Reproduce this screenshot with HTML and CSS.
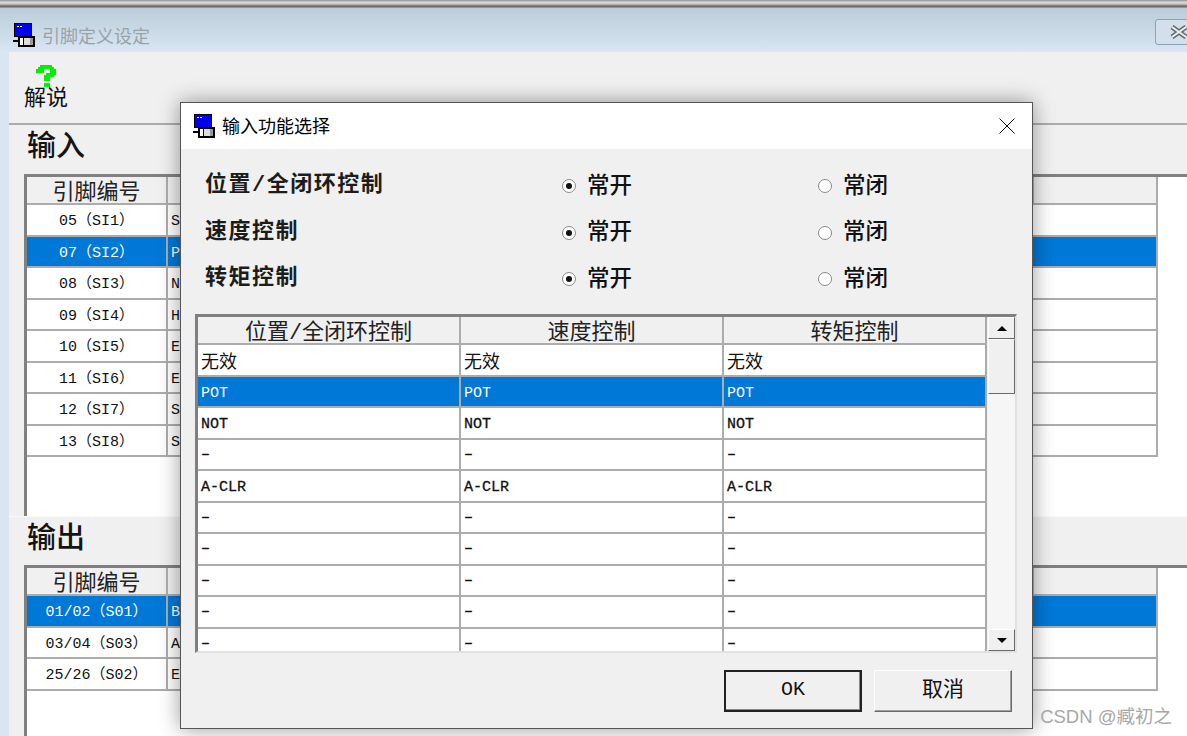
FILE: index.html
```html
<!DOCTYPE html>
<html lang="en">

<head>
    <meta charset="UTF-8">
    <meta name="viewport" content="width=device-width, initial-scale=1.0">
    <title>引脚定义设定</title>
    <link rel="stylesheet" href="styles.css">
</head>

<body>

    <svg class="sprites" width="0" height="0">
        <symbol id="app-icon" viewBox="0 0 22 24" shape-rendering="crispEdges">
            <rect x="1" y="0" width="18" height="14" fill="#000"/>
            <rect x="2" y="1" width="16" height="12" fill="#0000f0"/>
            <rect x="4" y="3" width="2" height="1" fill="#fff"/>
            <rect x="7" y="3" width="2" height="1" fill="#fff"/>
            <rect x="0" y="17" width="6" height="2" fill="#000"/>
            <rect x="5" y="13" width="17" height="11" fill="#000"/>
            <rect x="7" y="15" width="3" height="7" fill="#fff"/>
            <rect x="11" y="15" width="9" height="7" fill="#ddd"/>
            <rect x="17" y="15" width="3" height="7" fill="#999"/>
        </symbol>
    </svg>

    <div class="top-strip"></div>

    <div class="titlebar">
        <svg class="icon-app"><use href="#app-icon"/></svg>
        <span class="titlebar-text">引脚定义设定</span>
        <span class="titlebar-close">
            <svg width="20" height="14" viewBox="0 0 20 14">
                <path d="M2 2 L16 12 M16 2 L2 12" stroke="#62696e" stroke-width="5" fill="none"/>
                <path d="M2 2 L16 12 M16 2 L2 12" stroke="#eef1f3" stroke-width="2" fill="none"/>
            </svg>
        </span>
    </div>

    <div class="client">
        <div class="toolbar">
            <div class="tool-btn">
                <svg class="icon-help" viewBox="0 0 10 11" shape-rendering="crispEdges">
                    <path fill="#00f000" d="M2 0h6v1h1v1h1v3H9v1H7v2H4V5h1V4h2V2H4v2H0V2h1V1h1z"/>
                    <path fill="#00f000" d="M4 9h3v2H4z"/>
                </svg>
                <span>解说</span>
            </div>
        </div>

        <h2 class="section-title">输入</h2>
        <div class="listbox listbox-in">
            <div class="list-row list-head"><div>引脚编号</div><div></div><div></div></div>
            <div class="list-row"><div class="pin">05（SI1）</div><div>S</div></div>
            <div class="list-row selected"><div class="pin">07（SI2）</div><div>P</div></div>
            <div class="list-row"><div class="pin">08（SI3）</div><div>N</div></div>
            <div class="list-row"><div class="pin">09（SI4）</div><div>H</div></div>
            <div class="list-row"><div class="pin">10（SI5）</div><div>E</div></div>
            <div class="list-row"><div class="pin">11（SI6）</div><div>E</div></div>
            <div class="list-row"><div class="pin">12（SI7）</div><div>S</div></div>
            <div class="list-row"><div class="pin">13（SI8）</div><div>S</div></div>
        </div>

        <h2 class="section-title section-out">输出</h2>
        <div class="listbox listbox-out">
            <div class="list-row list-head"><div>引脚编号</div><div></div><div></div></div>
            <div class="list-row selected"><div class="pin">01/02（S01）</div><div>B</div></div>
            <div class="list-row"><div class="pin">03/04（S03）</div><div>A</div></div>
            <div class="list-row"><div class="pin">25/26（S02）</div><div>E</div></div>
        </div>
    </div>

    <div class="dialog">
        <div class="dialog-title">
            <svg class="icon-app"><use href="#app-icon"/></svg>
            <span class="dialog-title-text">输入功能选择</span>
            <svg class="dialog-close" width="16" height="16" viewBox="0 0 16 16">
                <path d="M0.5 0.5 L15.5 15.5 M15.5 0.5 L0.5 15.5" stroke="#111" stroke-width="1" fill="none"/>
            </svg>
        </div>

        <div class="options">
            <div class="option-label">位置/全闭环控制</div>
            <div class="option"><span class="radio checked"></span>常开</div>
            <div class="option"><span class="radio"></span>常闭</div>
            <div class="option-label">速度控制</div>
            <div class="option"><span class="radio checked"></span>常开</div>
            <div class="option"><span class="radio"></span>常闭</div>
            <div class="option-label">转矩控制</div>
            <div class="option"><span class="radio checked"></span>常开</div>
            <div class="option"><span class="radio"></span>常闭</div>
        </div>

        <div class="func-box">
            <div class="func-grid">
                <div class="func-row func-head"><div>位置/全闭环控制</div><div>速度控制</div><div>转矩控制</div></div>
                <div class="func-row func-cjk"><div>无效</div><div>无效</div><div>无效</div></div>
                <div class="func-row selected"><div>POT</div><div>POT</div><div>POT</div></div>
                <div class="func-row func-strong"><div>NOT</div><div>NOT</div><div>NOT</div></div>
                <div class="func-row func-dash"><div>–</div><div>–</div><div>–</div></div>
                <div class="func-row func-strong"><div>A-CLR</div><div>A-CLR</div><div>A-CLR</div></div>
                <div class="func-row func-dash"><div>–</div><div>–</div><div>–</div></div>
                <div class="func-row func-dash"><div>–</div><div>–</div><div>–</div></div>
                <div class="func-row func-dash"><div>–</div><div>–</div><div>–</div></div>
                <div class="func-row func-dash"><div>–</div><div>–</div><div>–</div></div>
                <div class="func-row func-dash"><div>–</div><div>–</div><div>–</div></div>
            </div>
            <div class="scrollbar">
                <div class="scroll-btn"><span class="arrow-up"></span></div>
                <div class="scroll-thumb"></div>
                <div class="scroll-track"></div>
                <div class="scroll-btn"><span class="arrow-down"></span></div>
            </div>
        </div>

        <div class="dialog-buttons">
            <button class="btn btn-default">OK</button>
            <button class="btn btn-cancel">取消</button>
        </div>
    </div>

    <div class="watermark">CSDN @臧初之</div>

</body>

</html>
```

FILE: styles.css
```css
* {
    box-sizing: border-box;
}

html, body {
    height: 100%;
}

body {
    margin: 0;
    height: 736px;
    overflow: hidden;
    background: #d9e5f2;
    color: #111;
    font-family: 'Liberation Mono', 'Noto Sans CJK SC', monospace;
    font-size: 15px;
}

.sprites {
    display: block;
    height: 0;
}

/* background window */
.top-strip {
    height: 8px;
    background: linear-gradient(to bottom, #8c8c8c 0, #d8d8d8 2px, #c8c8c8 4px, #6c6c6c 6px, #6c6c6c 7px, #b4c4d2 8px);
}

.titlebar {
    height: 44px;
    display: flex;
    align-items: center;
    padding: 10px 0 0 13px;
    background: linear-gradient(to bottom, #bbccd9, #d9e6f3);
}

.icon-app {
    width: 22px;
    height: 24px;
    flex: none;
}

.titlebar-text {
    margin-left: 7px;
    font-size: 18px;
    color: #98a2aa;
}

.titlebar-close {
    margin-left: auto;
    width: 34px;
    height: 26px;
    margin-right: -2px;
    margin-top: -6px;
    padding: 5px 0 0 14px;
    border: 1px solid #8fa0bb;
    border-radius: 3px;
    background: #d3dfea;
}

.titlebar-close svg {
    display: block;
}

.client {
    margin-left: 9px;
    height: 684px;
    background: #f0f0f0;
}

.toolbar {
    height: 73px;
    padding: 13px 0 0 15px;
    border-bottom: 2px solid #acacac;
}

.tool-btn {
    width: 44px;
    display: flex;
    flex-direction: column;
    align-items: center;
    font-size: 22px;
    line-height: 26px;
}

.icon-help {
    width: 20px;
    height: 22px;
    flex: none;
}

.section-title {
    margin: 0;
    height: 49px;
    padding: 4px 0 0 18px;
    font-size: 29px;
    line-height: 40px;
    font-weight: 500;
    color: #141414;
}

.section-out {
    border-top: 1px solid #fafafa;
    padding-top: 4px;
}

.listbox {
    margin-left: 15px;
    background: #fff;
    border-top: 3px solid #808080;
    border-left: 3px solid #808080;
}

.listbox-in {
    height: 342px;
}

.listbox-out {
    height: 172px;
}

.list-row {
    width: 1131px;
    height: 31.5px;
    display: grid;
    grid-template-columns: 141px 866px 124px;
    grid-template-rows: minmax(0, 1fr);
    border-bottom: 2px solid #acacac;
    border-right: 2px solid #acacac;
    line-height: 29px;
}

.list-row > div {
    border-right: 2px solid #acacac;
    padding: 2px 0 0 3px;
    white-space: nowrap;
}

.list-row > div:nth-child(2) {
    grid-column: span 2;
}

.list-row > .pin {
    padding-left: 0;
    text-align: center;
}

.list-head {
    height: 28px;
    background: #f0f0f0;
    font-size: 22px;
    line-height: 27px;
    color: #222;
}

.list-head > div {
    text-align: center;
    padding: 3px 0 0;
}

.list-head > div:nth-child(2) {
    grid-column: auto;
}

.selected {
    background: #0078d7;
    color: #fff;
}

/* dialog */
.dialog {
    position: absolute;
    left: 180px;
    top: 102px;
    width: 853px;
    height: 627px;
    background: #f0f0f0;
    border: 1px solid #555;
    box-shadow: 0 0 20px rgba(0, 0, 0, 0.4);
}

.dialog-title {
    height: 46px;
    display: flex;
    align-items: center;
    padding: 0 17px 0 12px;
    background: #fff;
}

.dialog-title-text {
    margin-left: 7px;
    margin-top: -2px;
    font-size: 18px;
    color: #000;
}

.dialog-close {
    margin-left: auto;
}

.options {
    display: grid;
    grid-template-columns: 357px 256px 1fr;
    grid-auto-rows: 46.5px;
    padding: 11px 0 0 24px;
    height: 165px;
}

.option-label {
    padding-top: 7px;
    font-size: 22px;
    font-weight: 700;
    letter-spacing: 1.5px;
    line-height: 38px;
    color: #1c1c1c;
}

.option {
    display: flex;
    align-items: center;
    gap: 11px;
    margin-top: 1px;
    font-size: 22.5px;
    font-weight: 500;
    height: 44px;
}

.radio {
    width: 14px;
    height: 14px;
    margin-top: 6px;
    border-radius: 50%;
    background: #fff;
    border: 1px solid #8a8a8a;
    flex: none;
    display: flex;
    align-items: center;
    justify-content: center;
}

.radio.checked::after {
    content: "";
    width: 6px;
    height: 6px;
    border-radius: 50%;
    background: #111;
}

.func-box {
    margin-left: 14px;
    width: 822px;
    height: 339px;
    display: flex;
    border-top: 3px solid #808080;
    border-left: 3px solid #808080;
    border-right: 2px solid #e2e2e2;
    border-bottom: 2px solid #e2e2e2;
    background: #fff;
    overflow: hidden;
}

.func-grid {
    width: 789px;
    flex: none;
    overflow: hidden;
    border-right: 2px solid #acacac;
}

.func-row {
    height: 31.5px;
    display: grid;
    grid-template-columns: 263px 263px 261px;
    grid-template-rows: minmax(0, 1fr);
    border-bottom: 2px solid #acacac;
    line-height: 29px;
    font-size: 15px;
}

.func-row > div {
    padding: 2px 0 0 3px;
    border-right: 2px solid #acacac;
    white-space: nowrap;
}

.func-row > div:last-child {
    border-right: 0;
}

.func-head {
    height: 28px;
    background: #f0f0f0;
    font-size: 22px;
    line-height: 27px;
    color: #222;
}

.func-head > div {
    padding: 3px 0 0;
    text-align: center;
}

.func-row.func-cjk > div {
    padding-top: 4px;
}

.func-cjk {
    font-size: 18px;
}

.func-strong {
    -webkit-text-stroke: 0.3px #111;
}

.func-dash {
    -webkit-text-stroke: 0.3px #111;
}

.func-row.func-dash > div {
    padding-top: 0;
}

.scrollbar {
    width: 28px;
    flex: none;
    display: flex;
    flex-direction: column;
    padding-left: 1px;
    background: #f0f0f0;
}

.scroll-btn {
    height: 22px;
    flex: none;
    display: flex;
    align-items: center;
    justify-content: center;
    background: #f0f0f0;
    border: 1px solid;
    border-color: #fff #696969 #696969 #fff;
}

.arrow-up {
    border-left: 5px solid transparent;
    border-right: 5px solid transparent;
    border-bottom: 5px solid #000;
}

.arrow-down {
    border-left: 5px solid transparent;
    border-right: 5px solid transparent;
    border-top: 5px solid #000;
}

.scroll-thumb {
    height: 55px;
    flex: none;
    background: #f0f0f0;
    border: 1px solid;
    border-color: #fff #696969 #696969 #fff;
}

.scroll-track {
    flex: 1;
    background: #f6f6f6;
}

.dialog-buttons {
    display: flex;
    gap: 12px;
    padding: 17px 0 0 543px;
}

.btn {
    width: 138px;
    height: 42px;
    padding: 0;
    background: #f0f0f0;
    font-family: inherit;
    color: #111;
    border: 1px solid;
    border-color: #fff #696969 #696969 #fff;
    box-shadow: inset -1px -1px 0 #a0a0a0;
}

.btn-default {
    padding-bottom: 3px;
    font-size: 20px;
    border: 2px solid #222;
    box-shadow: inset -1px -1px 0 #888;
}

.btn-cancel {
    padding-bottom: 9px;
    font-size: 21px;
}

.watermark {
    position: absolute;
    right: 15px;
    top: 705px;
    font-family: 'Liberation Sans', 'Noto Sans CJK SC', sans-serif;
    font-size: 18.5px;
    line-height: 24px;
    color: #a8a8a8;
}
```
